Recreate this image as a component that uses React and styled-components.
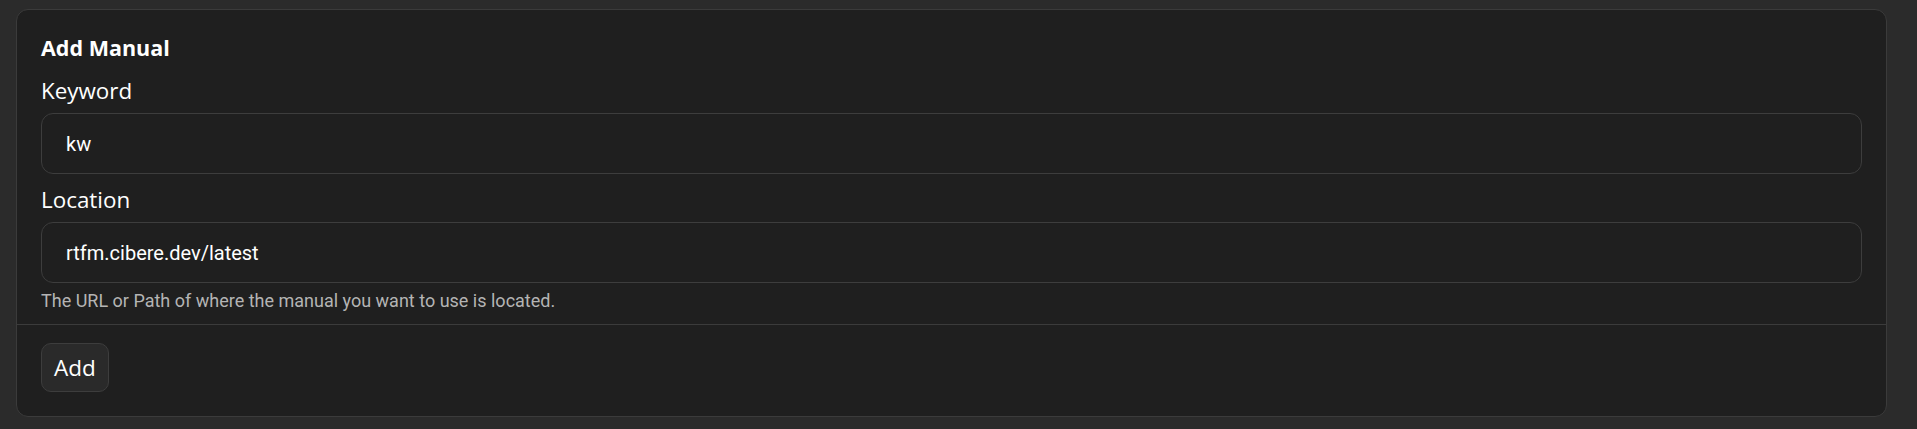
import React from 'react';
import styled, { createGlobalStyle } from 'styled-components';

const GlobalStyle = createGlobalStyle`
    html, body {
        margin: 0;
        padding: 0;
        background: #2b2b2b;
    }
    body {
        font-family: "Open Sans", "Noto Sans", sans-serif;
        color: #ffffff;
    }
`;

const Page = styled.div`
    padding: 9px 30px 12px 16px;
`;

const Card = styled.section`
    background: #1f1f1f;
    border: 1px solid #3b3b3b;
    border-radius: 12px;
    overflow: hidden;
`;

const Body = styled.div`
    display: flex;
    flex-direction: column;
    padding: 22px 24px 11px 24px;
`;

const Title = styled.h3`
    margin: 0 0 12px 0;
    font-size: 21.5px;
    font-weight: 700;
    line-height: 32px;
`;

const Field = styled.div`
    display: flex;
    flex-direction: column;
    margin-bottom: ${p => (p.$last ? '0' : '11px')};
`;

const Label = styled.label`
    font-size: 22.4px;
    line-height: 30px;
    margin-bottom: 7px;
`;

const Input = styled.input`
    box-sizing: border-box;
    height: 61px;
    width: 100%;
    padding: 0 24px;
    background: #1f1f1f;
    border: 1px solid #3d3d3d;
    border-radius: 12px;
    color: #ffffff;
    font-family: Roboto, sans-serif;
    font-size: 20px;
    outline: none;
`;

const Hint = styled.p`
    margin: 6px 0 0 0;
    font-family: Roboto, sans-serif;
    font-size: 18px;
    line-height: 24px;
    color: #b4b4b4;
`;

const Footer = styled.div`
    display: flex;
    border-top: 1px solid #3b3b3b;
    padding: 18px 24px 24px 24px;
`;

const Button = styled.button`
    height: 49px;
    padding: 0 12px;
    background: #2a2a2a;
    border: 1px solid #3d3d3d;
    border-radius: 10px;
    color: #ffffff;
    font-family: "Open Sans", sans-serif;
    font-size: 22.5px;
    cursor: pointer;
`;

const App = () => {
    return (
        <>
            <GlobalStyle />
            <Page>
                <Card>
                    <Body>
                        <Title>Add Manual</Title>
                        <Field>
                            <Label>Keyword</Label>
                            <Input defaultValue="kw" />
                        </Field>
                        <Field $last>
                            <Label>Location</Label>
                            <Input defaultValue="rtfm.cibere.dev/latest" />
                            <Hint>The URL or Path of where the manual you want to use is located.</Hint>
                        </Field>
                    </Body>
                    <Footer>
                        <Button>Add</Button>
                    </Footer>
                </Card>
            </Page>
        </>
    );
};

export default App;
